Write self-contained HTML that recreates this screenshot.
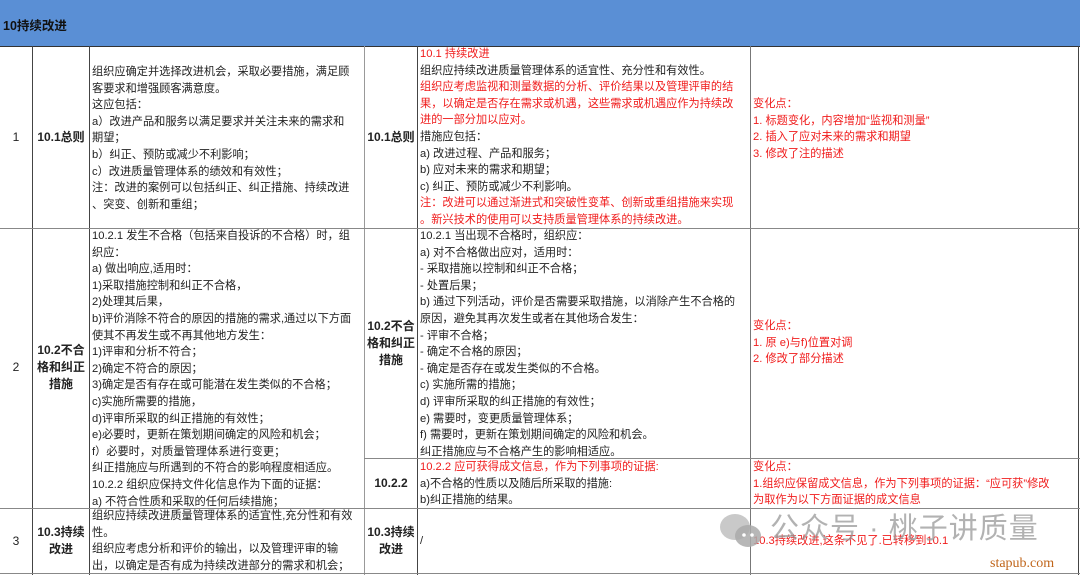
<!DOCTYPE html>
<html><head><meta charset="utf-8"><style>
body{margin:0;width:1080px;height:575px;overflow:hidden;background:#fff;font-family:"Liberation Sans","Noto Sans CJK SC",sans-serif;font-size:11.2px;color:#222;position:relative}
.h{position:absolute;left:0;top:0;width:1080px;height:46px;background:#5a8fd5;border-bottom:1px solid #333}
.h span{position:absolute;left:3px;top:15px;font-weight:bold;font-size:12.5px;color:#111}
.v{position:absolute;width:1px;background:#444}
.hl{position:absolute;height:1px;background:#888}
.t{position:absolute;line-height:16.6px;white-space:nowrap}
.c{position:absolute;text-align:center;font-weight:bold;line-height:17px;font-size:12px}
.r{color:#f01c1c}
</style></head><body>
<div class="h"><span>10持续改进</span></div>
<div class="v" style="left:32px;top:46px;height:529px"></div>
<div class="v" style="left:89px;top:46px;height:529px"></div>
<div class="v" style="left:364px;top:46px;height:529px;background:#999"></div>
<div class="v" style="left:417px;top:46px;height:529px"></div>
<div class="v" style="left:750px;top:46px;height:529px;background:#777"></div>
<div class="v" style="left:1078px;top:46px;height:529px"></div>
<div class="hl" style="left:0;top:228px;width:1080px"></div>
<div class="hl" style="left:364px;top:458px;width:716px"></div>
<div class="hl" style="left:0;top:508px;width:1080px"></div>
<div class="hl" style="left:0;top:573px;width:1080px"></div>

<div class="c" style="left:0;width:32px;top:129px;font-weight:normal">1</div>
<div class="c" style="left:33px;width:56px;top:129px">10.1总则</div>
<div class="t" style="left:92px;top:64px">组织应确定并选择改进机会，采取必要措施，满足顾<br>客要求和增强顾客满意度。<br>这应包括：<br>a）改进产品和服务以满足要求并关注未来的需求和<br>期望；<br>b）纠正、预防或减少不利影响；<br>c）改进质量管理体系的绩效和有效性；<br>注：改进的案例可以包括纠正、纠正措施、持续改进<br>、突变、创新和重组；</div>
<div class="c" style="left:365px;width:52px;top:129px">10.1总则</div>
<div class="t" style="left:420px;top:46px"><span class="r">10.1 持续改进</span><br>组织应持续改进质量管理体系的适宜性、充分性和有效性。<br><span class="r">组织应考虑监视和测量数据的分析、评价结果以及管理评审的结<br>果，以确定是否存在需求或机遇，这些需求或机遇应作为持续改<br>进的一部分加以应对。</span><br>措施应包括：<br>a) 改进过程、产品和服务；<br>b) 应对未来的需求和期望；<br>c) 纠正、预防或减少不利影响。<br><span class="r">注：改进可以通过渐进式和突破性变革、创新或重组措施来实现<br>。新兴技术的使用可以支持质量管理体系的持续改进。</span></div>
<div class="t r" style="left:753px;top:96px">变化点：<br>1. 标题变化，内容增加“监视和测量”<br>2. 插入了应对未来的需求和期望<br>3. 修改了注的描述</div>

<div class="c" style="left:0;width:32px;top:359px;font-weight:normal">2</div>
<div class="c" style="left:33px;width:56px;top:342px">10.2不合<br>格和纠正<br>措施</div>
<div class="t" style="left:92px;top:228px">10.2.1 发生不合格（包括来自投诉的不合格）时，组<br>织应：<br>a) 做出响应,适用时：<br>1)采取措施控制和纠正不合格，<br>2)处理其后果，<br>b)评价消除不符合的原因的措施的需求,通过以下方面<br>使其不再发生或不再其他地方发生：<br>1)评审和分析不符合；<br>2)确定不符合的原因；<br>3)确定是否有存在或可能潜在发生类似的不合格；<br>c)实施所需要的措施，<br>d)评审所采取的纠正措施的有效性；<br>e)必要时，更新在策划期间确定的风险和机会；<br>f）必要时，对质量管理体系进行变更；<br>纠正措施应与所遇到的不符合的影响程度相适应。<br>10.2.2 组织应保持文件化信息作为下面的证据：<br>a) 不符合性质和采取的任何后续措施；</div>
<div class="c" style="left:365px;width:52px;top:318px">10.2不合<br>格和纠正<br>措施</div>
<div class="t" style="left:420px;top:228px">10.2.1 当出现不合格时，组织应：<br>a) 对不合格做出应对，适用时：<br>- 采取措施以控制和纠正不合格；<br>- 处置后果；<br>b) 通过下列活动，评价是否需要采取措施，以消除产生不合格的<br>原因，避免其再次发生或者在其他场合发生：<br>- 评审不合格；<br>- 确定不合格的原因；<br>- 确定是否存在或发生类似的不合格。<br>c) 实施所需的措施；<br>d) 评审所采取的纠正措施的有效性；<br>e) 需要时，变更质量管理体系；<br>f) 需要时，更新在策划期间确定的风险和机会。<br>纠正措施应与不合格产生的影响相适应。</div>
<div class="t r" style="left:753px;top:318px">变化点：<br>1. 原 e)与f)位置对调<br>2. 修改了部分描述</div>
<div class="c" style="left:365px;width:52px;top:475px">10.2.2</div>
<div class="t" style="left:420px;top:459px"><span class="r">10.2.2 应可获得成文信息，作为下列事项的证据:</span><br>a)不合格的性质以及随后所采取的措施:<br>b)纠正措施的结果。</div>
<div class="t r" style="left:753px;top:459px">变化点：<br>1.组织应保留成文信息，作为下列事项的证据：“应可获”修改<br>为取作为以下方面证据的成文信息</div>

<div class="c" style="left:0;width:32px;top:533px;font-weight:normal">3</div>
<div class="c" style="left:33px;width:56px;top:524px">10.3持续<br>改进</div>
<div class="t" style="left:92px;top:508px">组织应持续改进质量管理体系的适宜性,充分性和有效<br>性。<br>组织应考虑分析和评价的输出，以及管理评审的输<br>出，以确定是否有成为持续改进部分的需求和机会；</div>
<div class="c" style="left:365px;width:52px;top:524px">10.3持续<br>改进</div>
<div class="t" style="left:420px;top:533px">/</div>
<div class="t r" style="left:753px;top:533px">10.3持续改进,这条不见了.已转移到10.1</div>

<svg style="position:absolute;left:716px;top:510px" width="50" height="42" viewBox="0 0 50 42"><ellipse cx="19" cy="17" rx="15" ry="13" fill="#bbb" opacity=".8"/><ellipse cx="32" cy="26" rx="13" ry="11" fill="#aaa" opacity=".85"/><circle cx="28" cy="25" r="1.8" fill="#fff"/><circle cx="36" cy="25" r="1.8" fill="#fff"/></svg>
<div class="t" style="left:770px;top:509px;font-size:29px;line-height:40px;color:#999;opacity:.75;letter-spacing:1px">公众号 · 桃子讲质量</div>
<div class="t" style="left:990px;top:555px;font-family:'Liberation Serif',serif;font-size:14px;line-height:18px;color:#c0651a">stapub.com</div>
</body></html>
